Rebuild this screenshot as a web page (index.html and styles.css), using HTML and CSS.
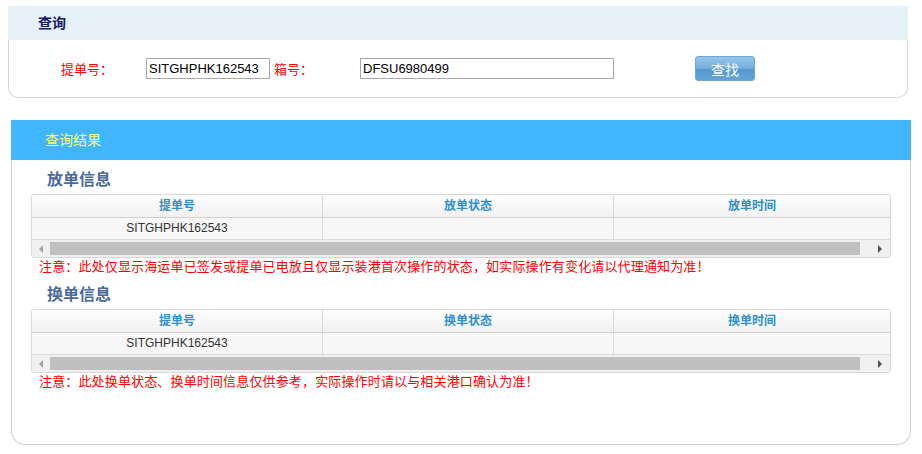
FILE: index.html
```html
<!DOCTYPE html>
<html lang="zh-CN">

<head>
    <meta charset="UTF-8">
    <title>查询</title>
    <link rel="stylesheet" href="styles.css">
</head>

<body>
    <div class="search-panel">
        <div class="search-head">查询</div>
        <div class="search-body">
            <label class="field-label label-bl" for="blno">提单号：</label>
            <input type="text" id="blno" class="field-input input-bl" value="SITGHPHK162543">
            <label class="field-label label-ctn" for="ctnno">箱号：</label>
            <input type="text" id="ctnno" class="field-input input-ctn" value="DFSU6980499">
            <button class="search-btn" type="button">查找</button>
        </div>
    </div>

    <div class="result-panel">
        <div class="result-head">查询结果</div>
        <div class="result-body">
            <h3 class="section-title">放单信息</h3>
            <div class="grid-box">
                <div class="grid-row grid-header">
                    <div class="cell">提单号</div>
                    <div class="cell">放单状态</div>
                    <div class="cell">放单时间</div>
                </div>
                <div class="grid-row grid-data">
                    <div class="cell">SITGHPHK162543</div>
                    <div class="cell"></div>
                    <div class="cell"></div>
                </div>
                <div class="hscroll">
                    <span class="arrow arrow-left"></span>
                    <span class="thumb"></span>
                    <span class="arrow arrow-right"></span>
                </div>
            </div>
            <p class="note">注意：此处仅显示海运单已签发或提单已电放且仅显示装港首次操作的状态，如实际操作有变化请以代理通知为准！</p>

            <h3 class="section-title second">换单信息</h3>
            <div class="grid-box">
                <div class="grid-row grid-header">
                    <div class="cell">提单号</div>
                    <div class="cell">换单状态</div>
                    <div class="cell">换单时间</div>
                </div>
                <div class="grid-row grid-data">
                    <div class="cell">SITGHPHK162543</div>
                    <div class="cell"></div>
                    <div class="cell"></div>
                </div>
                <div class="hscroll">
                    <span class="arrow arrow-left"></span>
                    <span class="thumb"></span>
                    <span class="arrow arrow-right"></span>
                </div>
            </div>
            <p class="note">注意：此处换单状态、换单时间信息仅供参考，实际操作时请以与相关港口确认为准！</p>
        </div>
    </div>
</body>

</html>
```

FILE: styles.css
```css
body {
    margin: 0;
    padding: 6px 0 0 0;
    font-family: "Liberation Sans", "Noto Sans CJK SC", sans-serif;
    font-size: 12px;
    background-color: #fff;
}

.search-panel {
    width: 900px;
    margin-left: 8px;
}

.search-head {
    height: 34px;
    line-height: 34px;
    background-color: #e6f1f7;
    padding-left: 30px;
    font-size: 14px;
    font-weight: bold;
    color: #13196b;
}

.search-body {
    display: flex;
    align-items: center;
    height: 57px;
    padding-left: 52px;
    border: 1px solid #d6d6d6;
    border-top: none;
    border-radius: 0 0 10px 10px;
}

.field-label {
    font-size: 13px;
    color: #f00;
}

.label-bl {
    width: 85px;
}

.label-ctn {
    width: 86px;
    margin-left: 4px;
}

.field-input {
    height: 21px;
    box-sizing: border-box;
    border: 1px solid #a9a9a9;
    padding: 0 2px;
    font-family: "Liberation Sans", sans-serif;
    font-size: 13px;
    color: #000;
}

.input-bl {
    width: 124px;
}

.input-ctn {
    width: 254px;
}

.search-btn {
    width: 60px;
    height: 25px;
    margin-left: 81px;
    border: 1px solid #6aa6d6;
    border-radius: 3px;
    background: linear-gradient(#98c7ea, #74aedd 50%, #5597cd 52%, #64a4d6);
    color: #fff;
    font-family: "Noto Sans CJK SC", sans-serif;
    font-size: 14px;
    padding: 0;
}

.result-panel {
    width: 900px;
    margin: 22px 0 0 11px;
}

.result-head {
    height: 40px;
    line-height: 40px;
    background-color: #41b5fe;
    padding-left: 34px;
    font-size: 14px;
    color: #ffff66;
}

.result-body {
    border: 1px solid #cfcfcf;
    border-top: none;
    border-radius: 0 0 14px 14px;
    padding: 10px 19px 55px 19px;
}

.section-title {
    margin: 0 0 4px 16px;
    height: 20px;
    line-height: 20px;
    font-size: 16px;
    font-weight: bold;
    color: #4a6a9c;
}

.section-title.second {
    margin-top: 11px;
}

.grid-box {
    border: 1px solid #d8d8d8;
    border-radius: 3px;
    overflow: hidden;
}

.grid-row {
    display: grid;
    grid-template-columns: 291px 291px 1fr;
}

.grid-header {
    height: 22px;
    background: linear-gradient(#fdfdfd, #f1f1f1);
    border-bottom: 1px solid #d0d0d0;
}

.grid-data {
    height: 21px;
    background-color: #f7f7f7;
    border-bottom: 1px solid #dcdcdc;
}

.cell {
    border-right: 1px solid #dadada;
    text-align: center;
    line-height: 21px;
    color: #333;
}

.cell:last-child {
    border-right: none;
}

.grid-header .cell {
    font-weight: bold;
    color: #2f8fca;
    line-height: 22px;
}

.hscroll {
    display: flex;
    align-items: center;
    height: 17px;
    background-color: #f0f0f0;
}

.thumb {
    width: 810px;
    height: 13px;
    margin-left: 7px;
    background-color: #c0c0c0;
}

.arrow {
    width: 0;
    height: 0;
    border-top: 4px solid transparent;
    border-bottom: 4px solid transparent;
}

.arrow-left {
    margin-left: 7px;
    border-right: 4px solid #a3a3a3;
}

.arrow-right {
    margin-left: 18px;
    border-left: 4px solid #505050;
}

.note {
    margin: 0 0 0 8px;
    height: 16px;
    line-height: 16px;
    font-size: 13px;
    letter-spacing: 0.15px;
    color: #f00;
    font-family: "Noto Sans CJK SC", sans-serif;
}
```
